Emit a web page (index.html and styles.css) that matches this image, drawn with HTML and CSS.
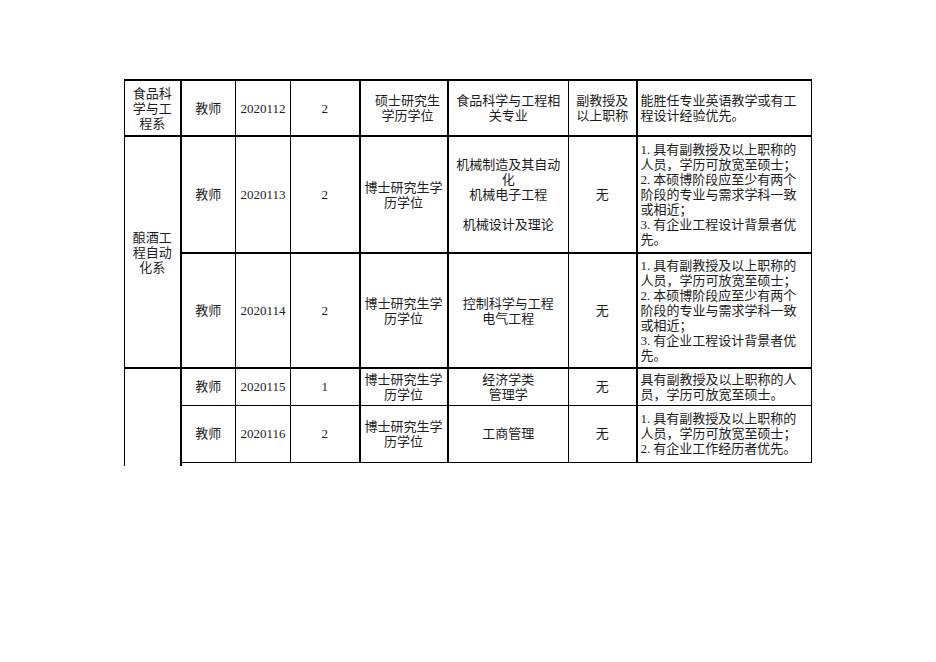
FILE: index.html
```html
<!DOCTYPE html>
<html lang="zh-CN">
<head>
<meta charset="utf-8">
<title>招聘计划表</title>
<link rel="stylesheet" href="styles.css">
</head>
<body>
<div class="sheet">
<table class="grid">
  <colgroup>
    <col class="c1"><col class="c2"><col class="c3"><col class="c4"><col class="c5"><col class="c6"><col class="c7"><col class="c8">
  </colgroup>
  <tr class="r1 tk">
    <td class="ctr">食品科<br>学与工<br>程系</td>
    <td class="ctr bl">教师</td>
    <td class="ctr">2020112</td>
    <td class="ctr">2</td>
    <td class="ctr bl shift">硕士研究生<br>学历学位</td>
    <td class="ctr bl">食品科学与工程相<br>关专业</td>
    <td class="ctr">副教授及<br>以上职称</td>
    <td class="lft bl">能胜任专业英语教学或有工<br>程设计经验优先。</td>
  </tr>
  <tr class="r2 tk">
    <td class="ctr" rowspan="2">酿酒工<br>程自动<br>化系</td>
    <td class="ctr bl">教师</td>
    <td class="ctr">2020113</td>
    <td class="ctr">2</td>
    <td class="ctr bl">博士研究生学<br>历学位</td>
    <td class="ctr bl">机械制造及其自动<br>化<br>机械电子工程<br>&nbsp;<br>机械设计及理论</td>
    <td class="ctr">无</td>
    <td class="lft bl"><span class="num">1.</span>具有副教授及以上职称的<br>人员，学历可放宽至硕士；<br><span class="num">2.</span>本硕博阶段应至少有两个<br>阶段的专业与需求学科一致<br>或相近；<br><span class="num">3.</span>有企业工程设计背景者优<br>先。</td>
  </tr>
  <tr class="r3 tk">
    <td class="ctr bl">教师</td>
    <td class="ctr">2020114</td>
    <td class="ctr">2</td>
    <td class="ctr bl">博士研究生学<br>历学位</td>
    <td class="ctr bl">控制科学与工程<br>电气工程</td>
    <td class="ctr">无</td>
    <td class="lft bl"><span class="num">1.</span>具有副教授及以上职称的<br>人员，学历可放宽至硕士；<br><span class="num">2.</span>本硕博阶段应至少有两个<br>阶段的专业与需求学科一致<br>或相近；<br><span class="num">3.</span>有企业工程设计背景者优<br>先。</td>
  </tr>
  <tr class="r4 tk">
    <td class="ctr open" rowspan="3"></td>
    <td class="ctr bl">教师</td>
    <td class="ctr">2020115</td>
    <td class="ctr">1</td>
    <td class="ctr bl">博士研究生学<br>历学位</td>
    <td class="ctr bl">经济学类<br>管理学</td>
    <td class="ctr">无</td>
    <td class="lft bl">具有副教授及以上职称的人<br>员，学历可放宽至硕士。</td>
  </tr>
  <tr class="r5">
    <td class="ctr bl">教师</td>
    <td class="ctr">2020116</td>
    <td class="ctr">2</td>
    <td class="ctr bl">博士研究生学<br>历学位</td>
    <td class="ctr bl">工商管理</td>
    <td class="ctr">无</td>
    <td class="lft bl"><span class="num">1.</span>具有副教授及以上职称的<br>人员，学历可放宽至硕士；<br><span class="num">2.</span>有企业工作经历者优先。</td>
  </tr>
  <tr class="r6">
    <td class="tail" colspan="7"></td>
  </tr>
</table>
</div>
</body>
</html>
```

FILE: styles.css
```css
html, body {
  margin: 0;
  padding: 0;
  background: #ffffff;
}

.sheet {
  padding: 79px 0 0 124px;
}

.grid {
  border-collapse: collapse;
  table-layout: fixed;
  width: 687px;
  font-family: "Liberation Serif", "Noto Sans CJK SC", serif;
  font-size: 13px;
  line-height: 15px;
  color: #1c1c1c;
}

.c1 { width: 56px; }
.c2 { width: 55px; }
.c3 { width: 55px; }
.c4 { width: 69px; }
.c5 { width: 88px; }
.c6 { width: 121px; }
.c7 { width: 68px; }
.c8 { width: 175px; }

.grid td {
  border: 1px solid #000;
  padding: 0 1px;
  vertical-align: middle;
  white-space: nowrap;
  overflow: hidden;
}

.grid .ctr { text-align: center; }
.grid .lft { text-align: left; padding-left: 3px; }
.grid .shift { padding-left: 9px; }

.num { margin-right: 3px; }

.grid td.bl { border-left-width: 2px; }

.grid tr.tk td { border-top-width: 2px; }

.r1 { height: 56px; }
.r2 { height: 117px; }
.r3 { height: 115px; }
.r4 { height: 37px; }
.r5 { height: 57px; }
.r6 { height: 3px; }

.grid td.open {
  border-bottom: none;
  border-right-width: 2px;
}

.grid td.tail {
  border-left: none;
  border-right: none;
  border-bottom: none;
  padding: 0;
  height: 3px;
}
```
